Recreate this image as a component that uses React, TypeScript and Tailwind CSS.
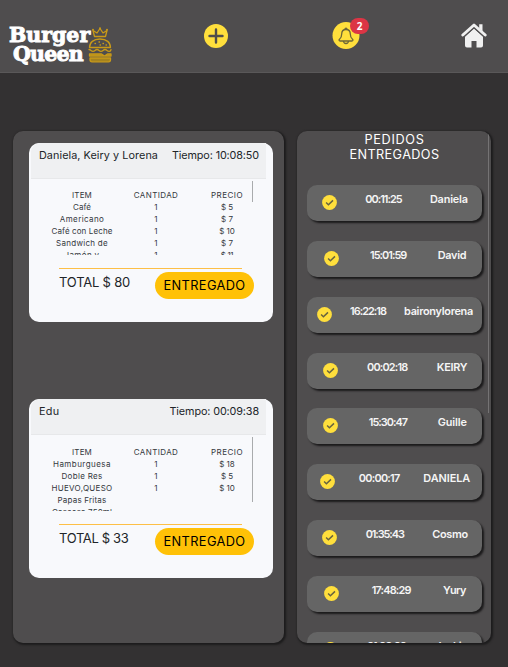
import { useLayoutEffect, useRef, useState } from 'react';
import clsx from 'clsx';

/** Text tracked so that its line takes up exactly `w` pixels. */
function Fit({ w, children, className }: { w: number; children: string; className?: string }) {
  const ref = useRef<HTMLSpanElement>(null);
  const [spacing, setSpacing] = useState(0);
  useLayoutEffect(() => {
    if (ref.current) setSpacing((w - ref.current.getBoundingClientRect().width) / children.length);
  }, []);
  return (
    <span ref={ref} className={clsx('inline-block whitespace-nowrap', className)} style={{ letterSpacing: spacing + 'px' }}>
      {children}
    </span>
  );
}

function BurgerIcon() {
  return (
    <svg viewBox="0 0 24 36" className="h-9 w-6" fill="none" stroke="#c99a18" strokeWidth="1.300" strokeLinejoin="round" strokeLinecap="round">
      <path d="M6.500 9.500 5 3.500l4 2.500 3-4.500 3 4.500 4-2.500-1.500 6Z" />
      <path d="M5 2.700v.1M12 1.200v.1M19 2.700v.1" strokeWidth="2" />
      <path d="M1.500 20.500c0-5 4-8.500 10.500-8.500s10.500 3.500 10.500 8.500Z" />
      <path d="M7 16.500h.5M11 15h.5M15 16.500h.5M12 18h.5M18 18h.5" />
      <path d="M1 22.500c2 0 2 1.800 4 1.800s2-1.800 4-1.800 2 1.800 4 1.800 2-1.800 4-1.800 2 1.800 4 1.800 1.500-.8 2-1.800" />
      <path d="M1.500 27h12l3 2 3-2H23v2H1.500Z" fill="#a6841f" />
      <path d="M2 31h20.500v1.800q0 2-2 2H4q-2 0-2-2Z" fill="#a6841f" />
    </svg>
  );
}

function Check() {
  return (
    <svg viewBox="0 0 15 15" className="mt-[10px] size-[15px] shrink-0">
      <circle cx="7.500" cy="7.500" r="7.400" fill="#ffdf3c" />
      <path d="m4.100 7.500 2.300 2.200 4.600-4.300" fill="none" stroke="#68643f" strokeWidth="1.500" />
    </svg>
  );
}

type Line = { t: string; w: number };
type Order = {
  name: Line;
  time: Line;
  items: Line[];
  prices: Line[];
  total: Line;
  bar: string;
  top: string;
};

const orders: Order[] = [
  {
    name: { t: 'Daniela, Keiry y Lorena', w: 119 },
    time: { t: 'Tiempo: 10:08:50', w: 87 },
    items: [
      { t: 'Café', w: 18 },
      { t: 'Americano', w: 44.5 },
      { t: 'Café con Leche', w: 61 },
      { t: 'Sandwich de', w: 52 },
      { t: 'Jamón y', w: 35 },
    ],
    prices: [
      { t: '$ 5', w: 12 },
      { t: '$ 7', w: 12 },
      { t: '$ 10', w: 15.5 },
      { t: '$ 7', w: 12 },
      { t: '$ 11', w: 12.5 },
    ],
    total: { t: 'TOTAL $ 80', w: 71 },
    bar: 'h-[21px]',
    top: 'pt-[10px]',
  },
  {
    name: { t: 'Edu', w: 20.5 },
    time: { t: 'Tiempo: 00:09:38', w: 89.5 },
    items: [
      { t: 'Hamburguesa', w: 58 },
      { t: 'Doble Res', w: 41 },
      { t: 'HUEVO,QUESO', w: 61 },
      { t: 'Papas Fritas', w: 49 },
      { t: 'Gaseosa 750ml', w: 60 },
    ],
    prices: [
      { t: '$ 18', w: 15.5 },
      { t: '$ 5', w: 12 },
      { t: '$ 10', w: 15.5 },
    ],
    total: { t: 'TOTAL $ 33', w: 69.5 },
    bar: 'h-[65px]',
    top: 'pt-[11px]',
  },
];

function OrderCard({ order }: { order: Order }) {
  return (
    <article className="h-[179px] rounded-[10px] bg-[#f8f9fc] pl-[2px] text-[#212529]">
      <header className="mr-[7px] flex h-9 justify-between rounded-tl-[9px] border-b border-[#e7e8ea] bg-[#eff0f2] pr-[7px] pl-2 text-[10.800px] leading-[25px]">
        <Fit w={order.name.w}>{order.name.t}</Fit>
        <Fit w={order.time.w}>{order.time.t}</Fit>
      </header>
      <div className="flex h-[76px] overflow-hidden pl-3 text-[8px] leading-3 text-[#34383c]">
        <div className={clsx('flex w-[78px] flex-col items-center', order.top)}>
          <Fit w={20} className="shrink-0">ITEM</Fit>
          {order.items.map((l) => <Fit key={l.t} w={l.w} className="shrink-0">{l.t}</Fit>)}
        </div>
        <div className={clsx('ml-[10px] flex w-[50px] flex-col items-center', order.top)}>
          <Fit w={44.5} className="shrink-0">CANTIDAD</Fit>
          {order.prices.map((_, i) => <span key={i} className="shrink-0">1</span>)}
        </div>
        <div className={clsx('ml-[21px] flex w-[50px] flex-col items-center', order.top)}>
          <Fit w={32} className="shrink-0">PRECIO</Fit>
          {order.prices.map((l, i) => <Fit key={i} w={l.w} className="shrink-0">{l.t}</Fit>)}
        </div>
        <div className={clsx('mt-[2px] w-px bg-[#a9abad]', order.bar)} />
      </div>
      <div className="mt-[13px] ml-[28px] h-px w-[183px] bg-[#fdbf46]" />
      <footer className="flex justify-between pt-[3px] pr-[19px] pl-7">
        <Fit w={order.total.w} className="text-[13px] leading-[20px]">{order.total.t}</Fit>
        <button className="h-[27px] w-[99px] rounded-full bg-[#ffc107] text-[12.800px] leading-[27px] text-black">
          <Fit w={82}>ENTREGADO</Fit>
        </button>
      </footer>
    </article>
  );
}

const delivered: [string, number, string, number][] = [
  ['00:11:25', 36.5, 'Daniela', 38],
  ['15:01:59', 36.3, 'David', 28.5],
  ['16:22:18', 36, 'baironylorena', 69],
  ['00:02:18', 40.3, 'KEIRY', 30.5],
  ['15:30:47', 38.3, 'Guille', 29],
  ['00:00:17', 40.7, 'DANIELA', 46.7],
  ['01:35:43', 38, 'Cosmo', 35.5],
  ['17:48:29', 39, 'Yury', 22.7],
  ['01:00:00', 39, 'Jackie', 32],
];

export default function App() {
  return (
    <div className="flex h-[667px] w-[508px] flex-col overflow-hidden bg-[#333132] font-['Inter',sans-serif]">
      <nav className="flex h-[73px] shrink-0 items-start border-b border-[#5a5859] bg-[#4f4d4e]">
        <div className="flex w-[204px] pt-[26px] pl-[9px]">
          <div className="flex w-[82px] flex-col font-['DejaVu_Serif',serif] text-[20.500px] leading-[19px] font-bold text-white [-webkit-text-stroke:0.900px_white]">
            <Fit w={82}>Burger</Fit>
            <Fit w={74} className="ml-1">Queen</Fit>
          </div>
          <div className="mt-px -ml-[3px]"><BurgerIcon /></div>
        </div>
        <svg viewBox="0 0 24 24" className="mt-[23.500px] size-6">
          <circle cx="12" cy="12" r="12" fill="#ffdf3c" />
          <path d="M12 5.500v13M5.500 12h13" stroke="#504e4b" strokeWidth="2.400" strokeLinecap="round" />
        </svg>
        <div className="relative mt-[22px] ml-[104px]">
          <svg viewBox="0 0 28 28" className="size-7">
            <circle cx="14" cy="13.500" r="13.500" fill="#ffdf3c" />
            <g fill="none" stroke="#6c6639" strokeWidth="1.300" strokeLinejoin="round">
              <path d="M14 7.500c-3 0-4.300 2.200-4.300 4.500 0 3.500-.8 4.200-2.200 5.300-.8.7-.5 1.700.6 1.700h11.800c1.100 0 1.400-1 .6-1.700-1.400-1.100-2.200-1.800-2.200-5.300 0-2.300-1.300-4.500-4.300-4.500Z" />
              <path d="M13 7.300c0-1.500 2-1.500 2 0M11.500 19c.2 3.300 4.800 3.300 5 0" />
            </g>
          </svg>
          <span className="absolute -top-[4px] left-[18px] flex h-4 w-[19px] items-center justify-center rounded-full bg-[#dc3545] font-['Open_Sans',sans-serif] text-[10px] font-bold text-white">2</span>
        </div>
        <svg viewBox="0 0 26 26" className="mt-[23px] ml-[100.500px] h-[26px] w-[26px]" fill="#f0f0f0">
          <path d="M4 13.500 13 5.500l9 8V22.500q0 2-2 2h-4.500v-6.500h-5v6.500H6q-2 0-2-2Z" />
          <path d="M1.800 12.500 13 2.200l11.200 10.300" fill="none" stroke="#4f4d4e" strokeWidth="4.800" />
          <path d="M1.800 12 13 2 24.200 12" fill="none" stroke="#f0f0f0" strokeWidth="2.900" strokeLinecap="round" strokeLinejoin="round" />
          <path d="M18.200 1.200h3.300v7l-3.300-2.800Z" />
        </svg>
      </nav>
      <main className="flex gap-[13px] pt-[58px] pl-[13px]">
        <section className="flex h-[512px] w-[271px] flex-col gap-[77px] rounded-[10px] bg-[#4f4d4e] pt-3 pr-[11px] pl-4 shadow-[1px_1px_2px_1px_#1d1c1d]">
          {orders.map((o) => <OrderCard key={o.name.t} order={o} />)}
        </section>
        <section className="flex h-[512px] w-[194px] overflow-hidden rounded-[10px] bg-[#4f4d4e] pl-[10px] shadow-[1px_1px_2px_1px_#1d1c1d]">
          <div className="w-[175px]">
            <h2 className="flex h-[54px] flex-col items-center pt-px text-[12.700px] leading-[15px] text-white">
              <Fit w={60}>PEDIDOS</Fit>
              <Fit w={90}>ENTREGADOS</Fit>
            </h2>
            <ul className="flex flex-col gap-[19.860px]">
              {delivered.map(([time, tw, name, nw]) => (
                <li key={time} className="flex h-9 shrink-0 justify-around rounded-[10px] bg-[#656565] pl-px text-[10.900px] leading-[29px] font-semibold text-[#f5f5f5] shadow-[2px_2px_2px_#1b1a1b]">
                  <Check />
                  <Fit w={tw}>{time}</Fit>
                  <Fit w={nw}>{name}</Fit>
                </li>
              ))}
            </ul>
          </div>
          <div className="mt-[2px] ml-[6px] h-[280px] w-px bg-[#757374]" />
        </section>
      </main>
    </div>
  );
}
